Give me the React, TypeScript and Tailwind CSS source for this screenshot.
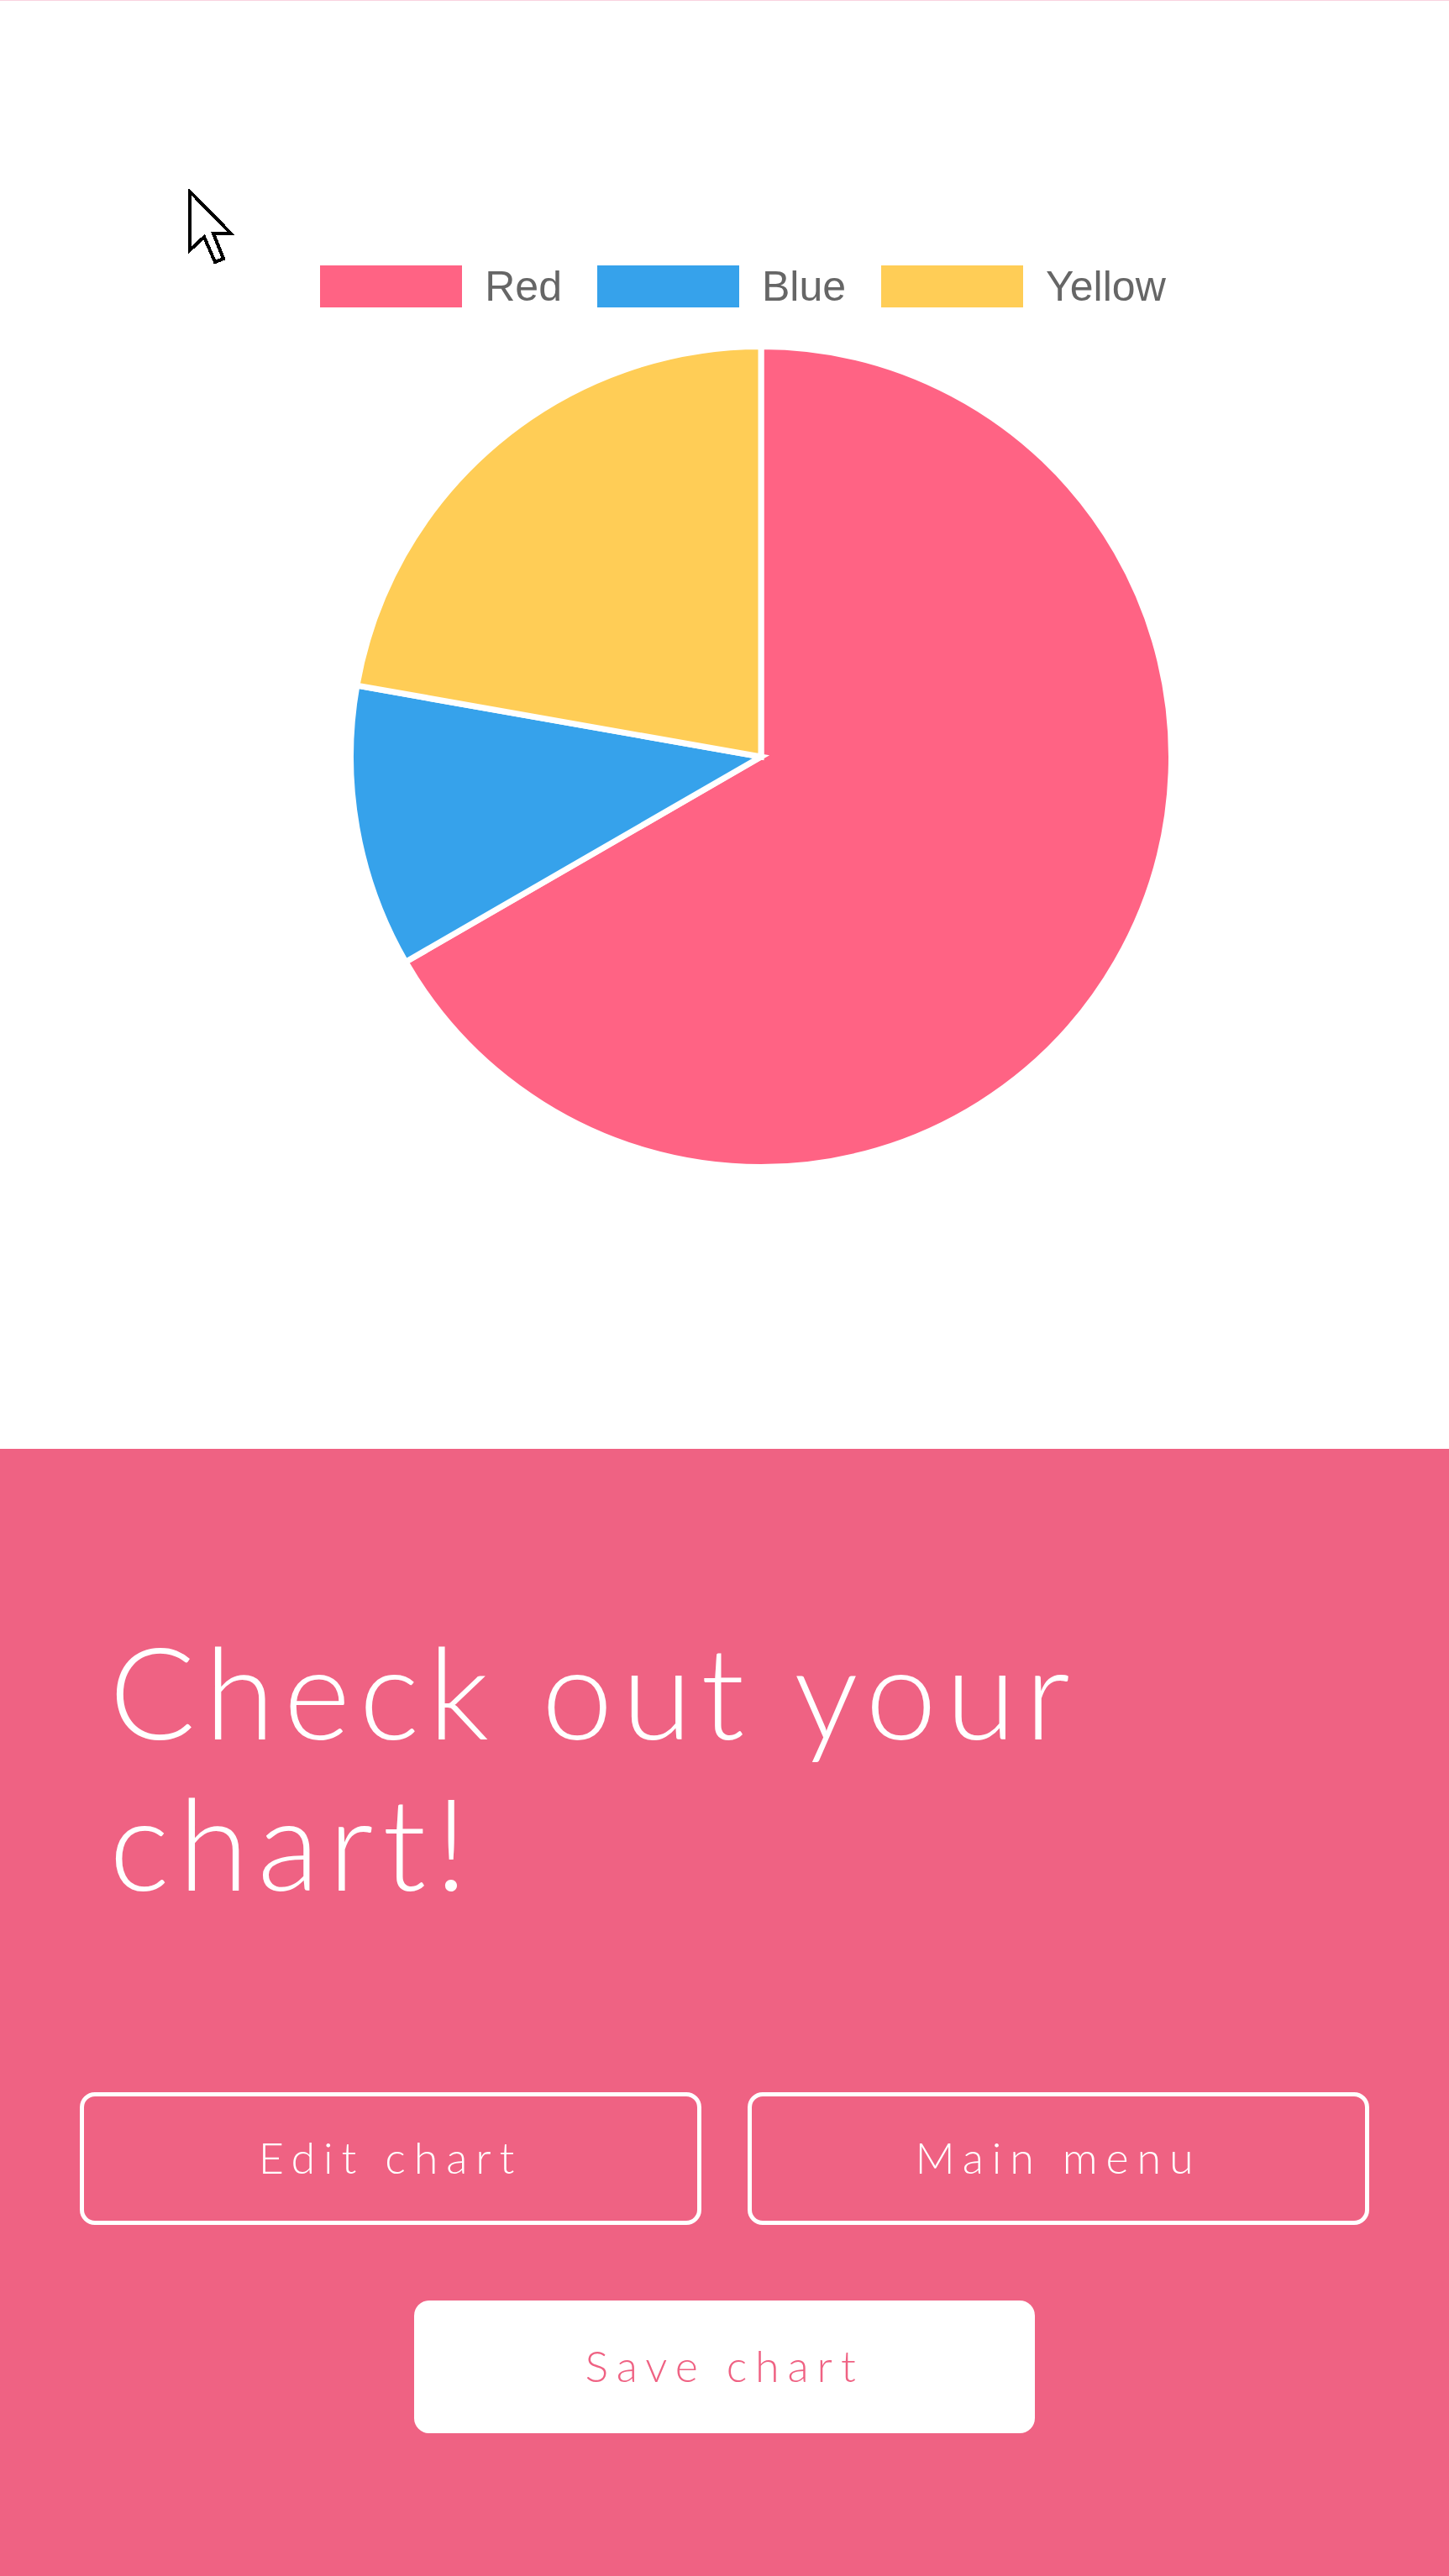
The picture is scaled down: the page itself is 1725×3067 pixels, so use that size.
import React from 'react';

interface Slice {
  label: string;
  value: number;
  color: string;
}

const slices: Slice[] = [
  { label: 'Red', value: 300, color: '#ff6384' },
  { label: 'Blue', value: 50, color: '#36a2eb' },
  { label: 'Yellow', value: 100, color: '#ffcd56' },
];

const SIZE = 980;
const C = SIZE / 2;
const R = 488.5;

const point = (deg: number) => {
  const rad = (deg * Math.PI) / 180;
  return [C + R * Math.cos(rad), C + R * Math.sin(rad)];
};

const PieChart: React.FC = () => {
  const total = slices.reduce((s, x) => s + x.value, 0);
  let start = -90;
  return (
    <svg width={SIZE} height={SIZE} viewBox={`0 0 ${SIZE} ${SIZE}`}>
      {slices.map((s) => {
        const sweep = (s.value / total) * 360;
        const end = start + sweep;
        const [x1, y1] = point(start);
        const [x2, y2] = point(end);
        const large = sweep > 180 ? 1 : 0;
        start = end;
        return (
          <path
            key={s.label}
            d={`M ${C} ${C} L ${x1} ${y1} A ${R} ${R} 0 ${large} 1 ${x2} ${y2} Z`}
            fill={s.color}
            stroke="#ffffff"
            strokeWidth={7}
          />
        );
      })}
    </svg>
  );
};

const Cursor: React.FC = () => (
  <svg
    className="absolute left-[223px] top-[224px]"
    width="56"
    height="92"
    viewBox="-3 -3 56 92"
    shapeRendering="crispEdges"
  >
    <polygon
      points="0,0 0,70 17,54 30,84 40,80 28,50 49,50"
      fill="#ffffff"
      stroke="#000000"
      strokeWidth={4}
      strokeLinejoin="miter"
    />
  </svg>
);

export default function App() {
  return (
    <div className="w-[1725px] min-h-[3067px] bg-white" style={{ fontFamily: 'Lato, "Open Sans", sans-serif' }}>
      {/* Chart area */}
      <div className="relative h-[1725px] border-t border-[#f9d3df] pt-[315px] pl-[86px]">
        <Cursor />
        <div className="flex justify-center h-[50px]">
          {slices.map((s) => (
            <div key={s.label} className="flex items-center mr-[42px]">
              <span className="w-[169px] h-[50px]" style={{ backgroundColor: s.color }} />
              <span
                className="ml-[27px] text-[50px] leading-none text-[#666666]"
                style={{ fontFamily: '"Liberation Sans", Arial, sans-serif' }}
              >
                {s.label}
              </span>
            </div>
          ))}
        </div>
        <div className="flex justify-center mt-[45px]">
          <PieChart />
        </div>
      </div>

      {/* Call to action */}
      <div className="bg-[#ef6283] pt-[197px] pb-[170px]">
        <h1 className="pl-[130px] pr-[200px] text-[152px] leading-[180px] font-light text-white tracking-[0.07em]">
          Check out your chart!
        </h1>
        <div className="grid grid-cols-2 gap-[55px] px-[95px] mt-[209px]">
          <button className="h-[158px] pb-1 border-[5px] border-white rounded-[18px] text-white text-[52px] font-light tracking-[0.19em]">
            Edit chart
          </button>
          <button className="h-[158px] pb-1 border-[5px] border-white rounded-[18px] text-white text-[52px] font-light tracking-[0.19em]">
            Main menu
          </button>
        </div>
        <div className="flex justify-center mt-[90px]">
          <button className="w-[739px] h-[158px] pb-1 bg-white rounded-[18px] text-[#ef6283] text-[52px] font-light tracking-[0.19em]">
            Save chart
          </button>
        </div>
      </div>
    </div>
  );
}
